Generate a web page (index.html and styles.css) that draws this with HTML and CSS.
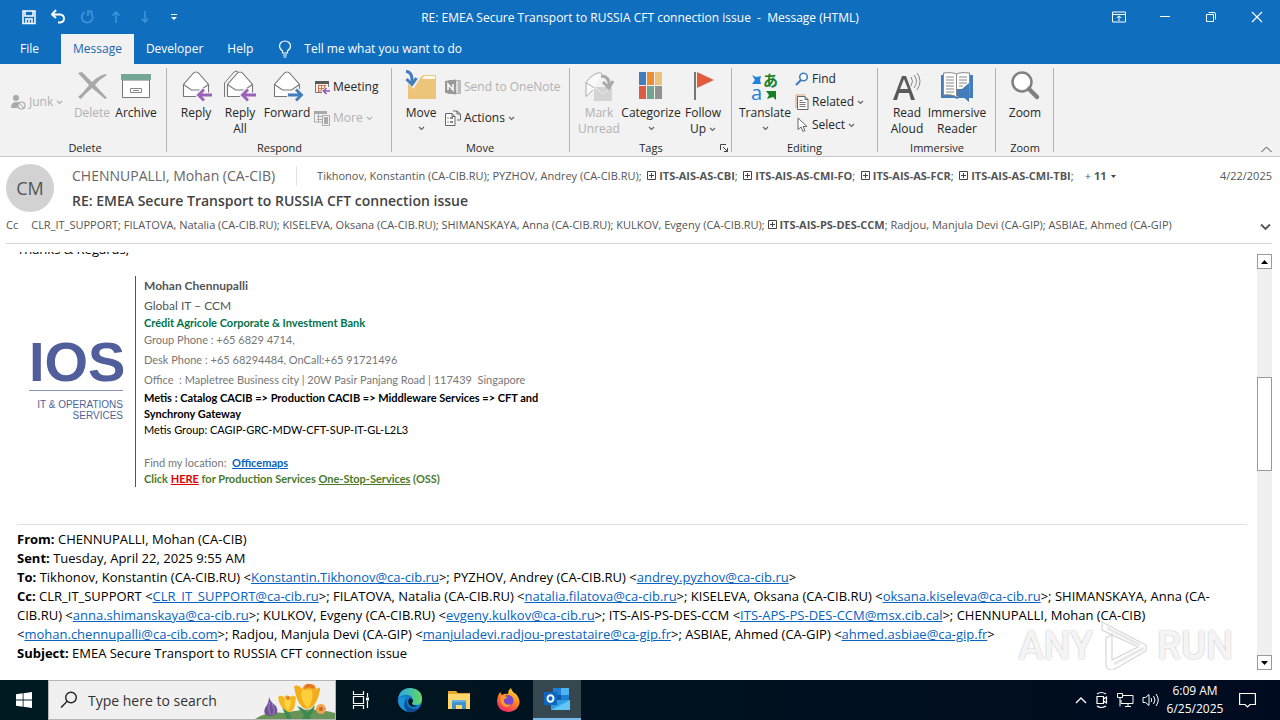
FILE: index.html
```html
<!DOCTYPE html>
<html lang="en">
<head>
<meta charset="utf-8">
<title>RE: EMEA Secure Transport to RUSSIA CFT connection issue - Message (HTML)</title>
<link rel="stylesheet" href="styles.css">
</head>
<body>
<svg class="defs" aria-hidden="true">
  <symbol id="chev" viewBox="0 0 7 5"><path d="M1 1l2.500 2.500L6 1" fill="none" stroke="currentColor" stroke-width="1.200"/></symbol>
  <symbol id="plus" viewBox="0 0 9 9"><path d="M.5.5h8v8h-8zM2 4.500h5M4.500 2v5" fill="none" stroke="#444"/></symbol>
  <symbol id="envelope" viewBox="0 0 32 32"><path d="M3.500 14.500v12h25v-12L19 3.500q-3-3-6 0zM3.500 14.500l8 5.500h9l8-5.500" fill="#fff" stroke="#777" stroke-width="1.100"/></symbol>
</svg>

<header class="titlebar">
  <div class="quick">
    <button aria-label="Save"><svg width="16" height="16" viewBox="0 0 16 16"><path d="M2 2h12v12.500H2zM4 2v5h8V2M5 14v-4h6v4M8 11v3" fill="none" stroke="#fff" stroke-width="1.500"/></svg></button>
    <button aria-label="Undo"><svg width="16" height="16" viewBox="0 0 16 16"><path d="M6 1L2 5.500l4 3.500M2.500 5.500H10q4 .5 4 4t-4 4H8" fill="none" stroke="#fff" stroke-width="1.900"/></svg></button>
    <button aria-label="Redo" class="dim"><svg width="16" height="16" viewBox="0 0 16 16"><path d="M6 3a5.500 5.500 0 1 0 6 1M9 7V2.500h4.500" fill="none" stroke="currentColor" stroke-width="1.800"/></svg></button>
    <button aria-label="Previous" class="dim"><svg width="16" height="16" viewBox="0 0 16 16"><path d="M8 14V3M4.500 6.500L8 3l3.500 3.500" fill="none" stroke="currentColor" stroke-width="1.700"/></svg></button>
    <button aria-label="Next" class="dim"><svg width="16" height="16" viewBox="0 0 16 16"><path d="M8 2v11M4.500 9.500L8 13l3.500-3.500" fill="none" stroke="currentColor" stroke-width="1.700"/></svg></button>
    <button aria-label="Customize"><svg width="16" height="16" viewBox="0 0 16 16"><path d="M5 5.500h6" stroke="#fff"/><path d="M5 8h6l-3 3z" fill="#fff"/></svg></button>
  </div>
  <h1 class="title">RE: EMEA Secure Transport to RUSSIA CFT connection issue&nbsp; -&nbsp; Message (HTML)</h1>
  <div class="window-buttons">
    <button aria-label="Ribbon display options"><svg width="14" height="12" viewBox="0 0 14 12"><path d="M.5 1h13v10H.5zM.5 3.500h13M7 10V5M4.800 7L7 4.800 9.200 7" fill="none" stroke="#fff"/></svg></button>
    <button aria-label="Minimize"><svg width="12" height="12" viewBox="0 0 12 12"><path d="M1 5.500h10" stroke="#fff"/></svg></button>
    <button aria-label="Restore"><svg width="12" height="12" viewBox="0 0 12 12"><path d="M1.500 3.500h7v7h-7zM3.500 1.500H9q1.500 0 1.500 1.500v5.500" fill="none" stroke="#fff"/></svg></button>
    <button aria-label="Close"><svg width="12" height="12" viewBox="0 0 12 12"><path d="M1 1l10 10M11 1L1 11" stroke="#fff" stroke-width="1.200"/></svg></button>
  </div>
</header>

<nav class="tabs">
  <button class="tab file">File</button>
  <button class="tab active">Message</button>
  <button class="tab">Developer</button>
  <button class="tab">Help</button>
  <button class="tell"><svg width="14" height="18" viewBox="0 0 14 18"><path d="M4.500 13v-2Q1.500 9 1.500 6a5.500 5 0 0 1 11 0q0 3-3 5v2zM5 15h4M5.500 17h3" fill="none" stroke="#fff" stroke-width="1.200"/></svg>Tell me what you want to do</button>
</nav>

<main class="window">
<section class="ribbon" aria-label="Message ribbon">
  <div class="group g-delete">
    <div class="tools">
      <div class="stack junk">
        <button class="small off"><svg width="16" height="16" viewBox="0 0 16 16"><circle cx="6" cy="4" r="3" fill="#aaa"/><path d="M1 14q0-6 5-6 3 0 4 1l-3 5z" fill="#aaa"/><circle cx="11.500" cy="11.500" r="3.500" fill="#eee" stroke="#aaa" stroke-width="1.200"/><path d="M9 9l5 5" stroke="#aaa"/></svg>Junk<svg class="chev"><use href="#chev"/></svg></button>
      </div>
      <button class="big off w44"><svg width="32" height="32" viewBox="0 0 32 32"><path d="M2 3l4-1 10 10Q22 6 29 4l2 1q-7 4-12 10l12 13-2 1-13-11Q9 24 5 29l-3-2Q8 22 13 15z" fill="#a9a9a9"/></svg><span>Delete</span></button>
      <button class="big w44"><svg width="32" height="32" viewBox="0 0 32 32"><path d="M2.500 10h27v17.500h-27z" fill="#fff" stroke="#777"/><path d="M1 4h30v6H1z" fill="#73a794"/><path d="M10.500 18.500h11v4h-11zM13 20.500h6" fill="none" stroke="#888"/></svg><span>Archive</span></button>
    </div>
    <h2>Delete</h2>
  </div>
  <div class="group g-respond">
    <div class="tools">
      <button class="big w44"><svg width="32" height="32" viewBox="0 0 32 32"><use href="#envelope"/><path d="M31 25H18M24 19l-6 6 6 6" fill="none" stroke="#f2f2f2" stroke-width="5"/><path d="M32 25H18.500M24 19.500L18.500 25l5.500 5.500" fill="none" stroke="#9a61b8" stroke-width="2.800"/></svg><span>Reply</span></button>
      <button class="big w44"><svg width="32" height="32" viewBox="0 0 32 32"><path d="M.5 27V13L10 2q2-2 4 0" fill="none" stroke="#777"/><use href="#envelope"/><path d="M31 25H18M24 19l-6 6 6 6" fill="none" stroke="#f2f2f2" stroke-width="5"/><path d="M32 25H18.500M24 19.500L18.500 25l5.500 5.500" fill="none" stroke="#9a61b8" stroke-width="2.800"/></svg><span>Reply<br>All</span></button>
      <button class="big w50"><svg width="32" height="32" viewBox="0 0 32 32"><use href="#envelope"/><path d="M16 25h14M25 19l6 6-6 6" fill="none" stroke="#f2f2f2" stroke-width="5"/><path d="M17 25h13.500M25 19.500l5.500 5.500-5.500 5.500" fill="none" stroke="#437dbb" stroke-width="2.800"/></svg><span>Forward</span></button>
      <div class="stack two">
        <button class="small"><svg width="16" height="16" viewBox="0 0 16 16"><path d="M1 2h14v3H1z" fill="#5a5a5a"/><path d="M1.500 5v8.500H8M14.500 5v3" fill="none" stroke="#777"/><path d="M4 6.500h8M4 9.500h6M4 12h3M4.500 6v7M7.500 6v6M10.500 6v3" fill="none" stroke="#d17640"/><path d="M16 12h-6M12.500 9L9.500 12l3 3" fill="none" stroke="#9254b6" stroke-width="1.600"/></svg>Meeting</button>
        <button class="small off"><svg width="16" height="16" viewBox="0 0 16 16"><path d="M0 1h13v3H0z" fill="#aaa"/><path d="M.5 4v8H8M3 6.500h5M3 9.500h5M4.500 4v8" fill="none" stroke="#aaa"/><path d="M8.500 5.500h7v10h-7z" fill="#f2f2f2" stroke="#aaa"/><path d="M10 7h4v7h-4z" fill="#aaa"/></svg>More<svg class="chev"><use href="#chev"/></svg></button>
      </div>
    </div>
    <h2>Respond</h2>
  </div>
  <div class="group g-move">
    <div class="tools">
      <button class="big w48"><svg width="32" height="32" viewBox="0 0 32 32"><path d="M3 29V9h11l4-4h13v24z" fill="#ecc57b"/><path d="M19 6h11v3H17z" fill="#fff8ea"/><path d="M1 2q7-2 7 12M1.500 9L8 15l4.500-7" fill="none" stroke="#f2f2f2" stroke-width="5"/><path d="M1 1.500q7 0 6 13M1.500 9l5.500 5.500L11.500 8" fill="none" stroke="#437dbb" stroke-width="3"/></svg><span>Move</span><svg class="chev"><use href="#chev"/></svg></button>
      <div class="stack two">
        <button class="small off"><svg width="16" height="16" viewBox="0 0 16 16"><path d="M3.500 1.500h12v13h-12z" fill="#ddd" stroke="#aaa"/><path d="M13 1h3v14h-3z" fill="#bbb"/><path d="M0 2l11-1.500v15L0 14z" fill="#999"/><path d="M3 11V5l5 6V5" fill="none" stroke="#fff" stroke-width="1.500"/></svg>Send to OneNote</button>
        <button class="small"><svg width="16" height="16" viewBox="0 0 16 16"><path d="M.5 3.500H7l3 3v9H.500zM7 3.500v3h3" fill="#fff" stroke="#666"/><path d="M2.500 8h1M5 8h3M2.500 12h1M5 12h3" stroke="#666" stroke-width="1.500"/><path d="M8 1h4l3.500 3v6H12M12 1v3h3" fill="none" stroke="#666"/></svg>Actions<svg class="chev"><use href="#chev"/></svg></button>
      </div>
    </div>
    <h2>Move</h2>
  </div>
  <div class="group g-tags">
    <div class="tools">
      <button class="big off w44"><svg width="32" height="32" viewBox="0 0 32 32"><path d="M10 20l-7 6.500v-14Q6 7 13 3.500q3-1.500 6 0M3 12.500l10 6.500" fill="#fafafa" stroke="#aaa"/><path d="M11 17h18v14H11z" fill="#d3d3d3"/><path d="M11 17l9 7 9-7" fill="none" stroke="#eee"/><path d="M18 6q9 0 8 11M20 12l6 6 4-7" fill="none" stroke="#aaa" stroke-width="3"/></svg><span>Mark<br>Unread</span></button>
      <button class="big w60"><svg width="32" height="32" viewBox="0 0 32 32"><path d="M4 2h7v13H4z" fill="#437dbb"/><path d="M12 2h7v13h-7z" fill="#ea8f36"/><path d="M20 2h7v13h-7z" fill="#eac27c"/><path d="M4 16h7v13H4z" fill="#dc5b42"/><path d="M12 16h7v13h-7z" fill="#72a48f"/><path d="M20 16h7v13h-7z" fill="#929292"/></svg><span>Categorize</span><svg class="chev"><use href="#chev"/></svg></button>
      <button class="big w44"><svg width="32" height="32" viewBox="0 0 32 32"><path d="M8 2v28" stroke="#777" stroke-width="2"/><path d="M10 2l17 8-17 8z" fill="#e25b3d"/></svg><span>Follow<br>Up <svg class="chev"><use href="#chev"/></svg></span></button>
    </div>
    <h2>Tags</h2>
    <button class="launcher" aria-label="Tags options"><svg width="8" height="8" viewBox="0 0 8 8"><path d="M.5 6V.5H6M3 3l4.500 4.500M7.500 4v3.500H4" fill="none" stroke="#444"/></svg></button>
  </div>
  <div class="group g-editing">
    <div class="tools">
      <button class="big w54"><svg width="32" height="32" viewBox="0 0 32 32"><path d="M3 5l4 2 5-1-1 4 1 4H3l3-4z" fill="#2383dc"/><path d="M17 21h10v9l-3-3-6 2 2-4z" fill="#168025"/><text x="2" y="30" class="ico-a">a</text><text x="14" y="16" class="ico-ja">あ</text></svg><span>Translate</span><svg class="chev"><use href="#chev"/></svg></button>
      <div class="stack three">
        <button class="small"><svg width="14" height="14" viewBox="0 0 14 14"><circle cx="8.500" cy="5" r="3.800" fill="#fff" stroke="#437dbb" stroke-width="1.600"/><path d="M6 8l-5 5" stroke="#437dbb" stroke-width="2.200"/></svg>Find</button>
        <button class="small"><svg width="14" height="16" viewBox="0 0 14 16"><path d="M1 14V1h9" fill="none" stroke="#e0a070"/><path d="M2.500 2.500H10l3 3v10H2.500zM10 2.500v3h3" fill="#fff" stroke="#666"/><path d="M4.500 8.500h6M4.500 10.500h6M4.500 12.500h6M4.500 6.500h3" stroke="#777"/></svg>Related<svg class="chev"><use href="#chev"/></svg></button>
        <button class="small"><svg width="14" height="16" viewBox="0 0 14 16"><path d="M3 1v11.500l3-2.500 2 4.500 2-1-2-4h4z" fill="#fff" stroke="#666"/></svg>Select<svg class="chev"><use href="#chev"/></svg></button>
      </div>
    </div>
    <h2>Editing</h2>
  </div>
  <div class="group g-immersive">
    <div class="tools">
      <button class="big w44"><svg width="32" height="32" viewBox="0 0 32 32"><path d="M2 30L11 6h4l9 24h-4l-2-7H8l-2 7zM9 19h8l-4-10z" fill="#5a5a5a" fill-rule="evenodd"/><path d="M20 7q3 4 0 9M23 5q5 6 0 13M26 3q6 8 0 17" fill="none" stroke="#888"/></svg><span>Read<br>Aloud</span></button>
      <button class="big w56"><svg width="32" height="32" viewBox="0 0 32 32"><path d="M0 5h32v23H18l-2 1-2-1H0z" fill="#437dbb"/><path d="M2.500 3q9-1 13 1 4-2 13-1v22q-9-1-13 2-4-3-13-2z" fill="#fff" stroke="#888"/><path d="M15.500 4v22M5 7h8M5 10h8M5 13h8M5 16h8M5 19h8M5 22h8M18 7h8M18 10h8M18 13h8M18 16h4" stroke="#888"/><path d="M16 19h5l7-6v19l-7-6h-5z" fill="#437dbb"/><path d="M29 18q3 4 0 9" fill="none" stroke="#437dbb"/></svg><span>Immersive<br>Reader</span></button>
    </div>
    <h2>Immersive</h2>
  </div>
  <div class="group g-zoom">
    <div class="tools">
      <button class="big w44"><svg width="32" height="32" viewBox="0 0 32 32"><circle cx="13" cy="12" r="9.500" fill="#fff" stroke="#808080" stroke-width="2.500"/><path d="M20 19l8 8" stroke="#808080" stroke-width="4.500" stroke-linecap="round"/></svg><span>Zoom</span></button>
    </div>
    <h2>Zoom</h2>
  </div>
  <button class="collapse" aria-label="Collapse ribbon"><svg width="11" height="7" viewBox="0 0 11 7"><path d="M.5 6l5-5 5 5" fill="none" stroke="#444"/></svg></button>
</section>

<section class="heading">
  <div class="who">
    <div class="avatar">CM</div>
    <div class="who-text">
      <div class="line">
        <span class="sender">CHENNUPALLI, Mohan (CA-CIB)</span>
        <span class="to">Tikhonov, Konstantin (CA-CIB.RU); PYZHOV, Andrey (CA-CIB.RU); &nbsp;<svg class="plus"><use href="#plus"/></svg> <b>ITS-AIS-AS-CBI</b>; &nbsp;<svg class="plus"><use href="#plus"/></svg> <b>ITS-AIS-AS-CMI-FO</b>; &nbsp;<svg class="plus"><use href="#plus"/></svg> <b>ITS-AIS-AS-FCR</b>; &nbsp;<svg class="plus"><use href="#plus"/></svg> <b>ITS-AIS-AS-CMI-TBI</b>;</span>
        <button class="more">+ <b>11</b><svg width="7" height="5" viewBox="0 0 7 5"><path d="M1 1h5L3.500 4z" fill="#444"/></svg></button>
        <time class="date">4/22/2025</time>
      </div>
      <h2 class="subject">RE: EMEA Secure Transport to RUSSIA CFT connection issue</h2>
    </div>
  </div>
  <div class="cc">
    <span class="cc-label">Cc</span>
    <span class="cc-list">CLR_IT_SUPPORT; FILATOVA, Natalia (CA-CIB.RU); KISELEVA, Oksana (CA-CIB.RU); SHIMANSKAYA, Anna (CA-CIB.RU); KULKOV, Evgeny (CA-CIB.RU); <svg class="plus"><use href="#plus"/></svg> <b>ITS-AIS-PS-DES-CCM</b>; Radjou, Manjula Devi (CA-GIP); ASBIAE, Ahmed (CA-GIP)</span>
    <button class="expand" aria-label="Expand header"><svg width="11" height="8" viewBox="0 0 11 8"><path d="M1 1.500l4.500 4.500L10 1.500" fill="none" stroke="#555" stroke-width="1.900"/></svg></button>
  </div>
</section>

<section class="reader">
  <article class="mail">
    <p class="cut">Thanks &amp; Regards,</p>
    <div class="signature">
      <div class="logo"><strong>IOS</strong><span>IT &amp; OPERATIONS<br>SERVICES</span></div>
      <div class="card">
        <p class="l20 s12"><b>Mohan Chennupalli</b></p>
        <p class="l20 s12">Global IT – CCM</p>
        <p class="l14 green"><b>Crédit Agricole Corporate &amp; Investment Bank</b></p>
        <p class="l20 gray">Group Phone : +65 6829 4714,</p>
        <p class="l20 gray">Desk Phone : +65 68294484, OnCall:+65 91721496</p>
        <p class="l20 gray">Office&nbsp; : Mapletree Business city | 20W Pasir Panjang Road | 117439&nbsp; Singapore</p>
        <p class="l16 black"><b>Metis : Catalog CACIB =&gt; Production CACIB =&gt; Middleware Services =&gt; CFT and<br>Synchrony Gateway</b></p>
        <p class="l16 black">Metis Group: CAGIP-GRC-MDW-CFT-SUP-IT-GL-L2L3</p>
        <p class="l16 find gray">Find my location:&nbsp; <a href="#"><b>Officemaps</b></a></p>
        <p class="l16 olive"><b>Click <a class="here" href="#">HERE</a> for Production Services <a class="oss" href="#">One-Stop-Services</a> (OSS)</b></p>
      </div>
    </div>
    <div class="quoted">
      <b>From:</b> CHENNUPALLI, Mohan (CA-CIB)<br>
      <b>Sent:</b> Tuesday, April 22, 2025 9:55 AM<br>
      <b>To:</b> Tikhonov, Konstantin (CA-CIB.RU) &lt;<a href="#">Konstantin.Tikhonov@ca-cib.ru</a>&gt;; PYZHOV, Andrey (CA-CIB.RU) &lt;<a href="#">andrey.pyzhov@ca-cib.ru</a>&gt;<br>
      <b>Cc:</b> CLR_IT_SUPPORT &lt;<a href="#">CLR_IT_SUPPORT@ca-cib.ru</a>&gt;; FILATOVA, Natalia (CA-CIB.RU) &lt;<a href="#">natalia.filatova@ca-cib.ru</a>&gt;; KISELEVA, Oksana (CA-CIB.RU) &lt;<a href="#">oksana.kiseleva@ca-cib.ru</a>&gt;; SHIMANSKAYA, Anna (CA-<br>CIB.RU) &lt;<a href="#">anna.shimanskaya@ca-cib.ru</a>&gt;; KULKOV, Evgeny (CA-CIB.RU) &lt;<a href="#">evgeny.kulkov@ca-cib.ru</a>&gt;; ITS-AIS-PS-DES-CCM &lt;<a href="#">ITS-APS-PS-DES-CCM@msx.cib.cal</a>&gt;; CHENNUPALLI, Mohan (CA-CIB)<br>
      &lt;<a href="#">mohan.chennupalli@ca-cib.com</a>&gt;; Radjou, Manjula Devi (CA-GIP) &lt;<a href="#">manjuladevi.radjou-prestataire@ca-gip.fr</a>&gt;; ASBIAE, Ahmed (CA-GIP) &lt;<a href="#">ahmed.asbiae@ca-gip.fr</a>&gt;<br>
      <b>Subject:</b> EMEA Secure Transport to RUSSIA CFT connection issue
    </div>
  </article>
  <div class="scrollbar">
    <button aria-label="Scroll up"><svg width="7" height="4" viewBox="0 0 7 4"><path d="M0 4l3.500-4L7 4z"/></svg></button>
    <div class="track"><div class="thumb"></div></div>
    <button aria-label="Scroll down"><svg width="7" height="4" viewBox="0 0 7 4"><path d="M0 0l3.500 4L7 0z"/></svg></button>
  </div>
  <div class="watermark"><span>ANY</span><svg width="56" height="52" viewBox="0 0 56 52"><path d="M5 10V2l44 23v6L16 50q-6 1-7-5V18l6-4v26l26-13z" fill="#fff" fill-opacity=".85" stroke="#d6d6d6" stroke-width="1.200"/><path d="M17 44L47 28M10 8l33 17" stroke="#e8e8e8" stroke-width="3"/></svg><span>RUN</span></div>
</section>
</main>

<footer class="taskbar">
  <button class="start" aria-label="Start"><svg width="16" height="16" viewBox="0 0 16 16"><path d="M0 2.300L6.700 1.300v6.200H0zM7.500 1.200L16 0v7.500H7.500zM0 8.400h6.700v6.300L0 13.700zM7.500 8.400H16V16l-8.500-1.200z" fill="#fff"/></svg></button>
  <label class="search">
    <svg width="18" height="18" viewBox="0 0 18 18"><circle cx="11" cy="6.500" r="5.300" fill="none" stroke="#222" stroke-width="1.400"/><path d="M7.200 10.300L1 16.500" stroke="#222" stroke-width="1.400"/></svg>
    <input type="text" placeholder="Type here to search" aria-label="Type here to search">
    <svg class="flowers" width="80" height="38" viewBox="0 0 80 38"><path d="M0 38q12-8 30-6 26-7 50 0v6z" fill="#689458"/><path d="M32 38l-5-12q8 2 9 12zM52 38l-10-13q12 4 14 13M46 38l14-14q-2 10-8 14" fill="#3f8a50"/><path d="M14 16q2 6 7 9 4 8-4 10-10 0-7-8 4-5 4-11z" fill="#6f5199"/><path d="M15 21q-3 8 1 13M17 23q4 6 1 11" fill="none" stroke="#a486c0"/><path d="M23 16q4-3 6 1 2-5 6-1 3-3 6 0-1 11-3 13-3 4-8 0-6-4-7-13z" fill="#f5b91f"/><path d="M30 17q-2 6 3 13 4-7 2-13" fill="#ffd447"/><circle cx="33" cy="17" r="2" fill="#e8812d"/><path d="M39 5q5-2 8 3 3-7 8-3 5-4 6 3 5-3 4 1-2 12-8 17-5 4-10 0-6-6-8-21z" fill="#f2ad1d"/><path d="M47 9q-3 9 6 19 6-10 4-19-5-1-10 0z" fill="#ffce3d"/><path d="M49 8q1-6 6-5 4 0 5 5-6-3-11 0z" fill="#e47629"/><circle cx="66" cy="28" r="5" fill="#f2ae51"/><path d="M61 28h10M66 23v10M63 25l6 6M69 25l-6 6" stroke="#e99242"/><circle cx="66" cy="28" r="2" fill="#c86231"/></svg>
  </label>
  <div class="apps">
    <button aria-label="Task View"><svg width="18" height="18" viewBox="0 0 18 18"><path d="M1.500 0v3.500h10V0M1.500 18v-3.500h10V18M1.500 5.500h10v7h-10zM15.500 2v4M15.500 10v7" fill="none" stroke="#fff" stroke-width="1.200"/><path d="M14 6.500h3v3h-3z" fill="#fff"/></svg></button>
    <button aria-label="Edge"><svg width="24" height="24" viewBox="0 0 24 24"><defs><linearGradient id="eg" x2="1"><stop stop-color="#24a7e4"/><stop offset="1" stop-color="#66d864"/></linearGradient></defs><circle cx="12" cy="12" r="12" fill="#1479cb"/><path d="M0 11Q2 0 12 0q12 1 12 11 0 6-6 6-6 0-4-3 2-6-4-7Q4 6 0 11z" fill="url(#eg)"/><path d="M8 9q-5 7 1 14-8-2-9-10 2-5 8-4z" fill="#1795d4"/><path d="M9 11q-2 9 7 10 4 0 6-2-4 6-12 5-7-6-1-13z" fill="#114b93"/><path d="M12 10q5 2 2 5 0 3 5 2.500-4 3-8-1-2-4 1-6.500z" fill="#061722"/></svg></button>
    <button aria-label="File Explorer"><svg width="22" height="20" viewBox="0 0 22 20"><path d="M0 1h8l2 2h12v16H0z" fill="#e6a52c"/><path d="M0 4h22v15H0z" fill="#ffd66c"/><path d="M4 19v-9h14v9h-4v-4H8v4z" fill="#3d93cf"/><path d="M4 10h14v2H4z" fill="#67b1df"/></svg></button>
    <button aria-label="Firefox"><svg width="24" height="24" viewBox="0 0 24 24"><defs><linearGradient id="fx" x1=".8" y1="0" x2=".3" y2="1"><stop stop-color="#ffe13a"/><stop offset=".45" stop-color="#ff8a22"/><stop offset="1" stop-color="#f12568"/></linearGradient></defs><path d="M4 4l2 3q3-2 6-1 0-4 3-6 1 4 5 6 5 6 3 11-3 7-11 7Q1 23 1 13q0-5 3-9z" fill="url(#fx)"/><circle cx="12" cy="12.500" r="5.500" fill="#7447ce"/><path d="M5 8q4-1 7 2-5 0-4 4 2 4 7 2-3 5-8 2-4-4-2-10z" fill="#ff9b27"/></svg></button>
    <button class="running" aria-label="Outlook"><svg width="26" height="24" viewBox="0 0 26 24"><path d="M9 1h16v14H9z" fill="#1b80d4"/><path d="M17 1h8v7h-8z" fill="#50b4f3"/><path d="M9 8h8v7H9z" fill="#0a5aa5"/><path d="M7 13h19v10H7z" fill="#2d9de5"/><path d="M7 23l19-10v10z" fill="#62c5f5"/><path d="M0 5h13v13H0z" fill="#0b67c2"/><ellipse cx="6.500" cy="11.500" rx="3" ry="3.300" fill="none" stroke="#fff" stroke-width="1.900"/></svg></button>
  </div>
  <div class="tray">
    <button aria-label="Show hidden icons"><svg width="12" height="8" viewBox="0 0 12 8"><path d="M1 7l5-5 5 5" fill="none" stroke="#fff" stroke-width="1.300"/></svg></button>
    <button aria-label="Meet now"><svg width="14" height="18" viewBox="0 0 14 18"><path d="M2 5.500h6.500v7H2zM8.500 8l3-2v6l-3-2M2 3q4-3 9 0M2 15q4 3 9 0" fill="none" stroke="#fff" stroke-width="1.200"/></svg></button>
    <button aria-label="Network"><svg width="17" height="15" viewBox="0 0 17 15"><path d="M5 2.500h11v8H4V7M8 13.500h6M11 10.500v3M.500.500h5v4h-5zM3 4.500v9" fill="none" stroke="#fff"/></svg></button>
    <button aria-label="Volume"><svg width="18" height="14" viewBox="0 0 18 14"><path d="M1 4.500h2.500L7 1.500v11l-3.500-3H1zM9 5q1.500 2 0 4M11.500 3q3 4 0 8M14 1q4.500 6 0 12" fill="none" stroke="#fff"/></svg></button>
  </div>
  <div class="clock"><time>6:09 AM</time><time>6/25/2025</time></div>
  <button class="notify" aria-label="Notifications"><svg width="17" height="16" viewBox="0 0 17 16"><path d="M.6 1.500h15.800v11H11l-2.500 2.500L6 12.500H.600z" fill="none" stroke="#fff" stroke-width="1.200"/></svg></button>
</footer>
</body>
</html>
```
FILE: styles.css
```css
* { box-sizing: border-box; }
body {
  margin: 0;
  min-height: 100vh;
  display: flex;
  flex-direction: column;
  overflow: hidden;
  background: #fff;
  color: #262626;
  font: 12px/16px "Open Sans", "Noto Sans", sans-serif;
}
button {
  border: 0;
  margin: 0;
  padding: 0;
  background: none;
  color: inherit;
  font: inherit;
  white-space: nowrap;
}
h1, h2, p { margin: 0; font: inherit; }
svg { display: block; flex: none; overflow: visible; }
.defs { position: absolute; width: 0; height: 0; }

/* title bar and tabs */
.titlebar {
  height: 34px;
  display: grid;
  grid-template-columns: 1fr auto 1fr;
  align-items: center;
  background: #106ebe;
  color: #fff;
}
.quick { display: flex; gap: 13px; padding-left: 21px; }
.dim { color: #3e92d8; }
.title { white-space: nowrap; padding-top: 2px; }
.window-buttons { display: flex; justify-content: flex-end; height: 30px; }
.window-buttons button { width: 46px; display: grid; place-items: center; }
.tabs { height: 30px; display: flex; background: #106ebe; color: #fff; padding-left: 8px; }
.tab { padding: 0 12px; }
.tab.file { margin-right: 10px; }
.tab.active { background: #f2f2f2; color: #1467b3; }
.tell { display: flex; align-items: center; gap: 12px; padding-left: 13px; }

/* ribbon */
.window { flex: 1; display: flex; flex-direction: column; }
.ribbon {
  display: flex;
  position: relative;
  height: 93px;
  background: #f2f2f2;
  border-bottom: 1px solid #c8c8c8;
}
.group { position: relative; display: flex; flex-direction: column; margin: 4px 0; padding: 0 6px 0 7px; border-right: 1px solid #b4b4b4; }
.group h2 { text-align: center; margin-top: auto; font-size: 11px; line-height: 16px; margin-bottom: -4px; }
.tools { display: flex; height: 70px; }
.g-delete { width: 167px; padding-left: 10px; }
.g-respond { width: 225px; }
.g-move { width: 178px; padding-left: 5px; }
.g-tags { width: 162px; }
.g-editing { width: 146px; padding-left: 6px; }
.g-immersive { width: 118px; }
.g-zoom { width: 58px; }
.big { display: flex; flex-direction: column; align-items: center; padding-top: 2px; line-height: 16px; }
.big > svg:first-child { margin-bottom: 3px; }
.big > .chev { margin-top: 5px; }
.w44 { width: 44px; }
.w48 { width: 48px; }
.w50 { width: 50px; }
.w54 { width: 54px; }
.w56 { width: 56px; }
.w60 { width: 60px; }
.off { color: #b1b1b1; }
.chev { width: 7px; height: 5px; color: #666; }
.off .chev { color: #b1b1b1; }
span .chev { display: inline-block; vertical-align: middle; }
.stack { display: flex; flex-direction: column; }
.stack.junk { width: 60px; padding-top: 26px; }
.stack.two { padding: 11px 0 0 2px; gap: 15px; }
.g-move .stack.two { padding-left: 0; }
.stack.three { padding: 3px 0 0 3px; gap: 7px; }
.small { display: flex; align-items: center; gap: 3px; height: 16px; }
.ico-a { font: 20px "Open Sans", sans-serif; fill: #2383dc; }
.ico-ja { font: bold 15px "Noto Sans CJK JP", sans-serif; fill: #168025; }
.launcher { position: absolute; right: 3px; bottom: 0; }
.collapse { margin: auto 8px 3px auto; }

/* message heading */
.heading { margin: 0 8px 0 6px; border-bottom: 1px solid #d8d8d8; color: #555; font-size: 11px; }
.who { display: flex; align-items: center; gap: 18px; padding-top: 7px; }
.avatar {
  width: 48px;
  height: 48px;
  border-radius: 50%;
  display: grid;
  place-items: center;
  flex: none;
  background: #d2d2d2;
  font-size: 18px;
}
.who-text { flex: 1; }
.line { display: flex; align-items: center; height: 22px; white-space: nowrap; }
.sender { font-size: 14px; line-height: 20px; padding-right: 21px; border-right: 1px solid #e2e2e2; color: #666; }
.to { padding-left: 20px; }
.plus { display: inline-block; width: 9px; height: 9px; }
.more { display: flex; align-items: center; gap: 3px; margin-left: 11px; }
.date { margin-left: auto; }
.subject { font-size: 14px; line-height: 20px; font-weight: 600; color: #444; margin-top: 4px; }
.cc { display: flex; align-items: center; gap: 13px; height: 31px; white-space: nowrap; padding-bottom: 5px; }
.expand { margin: 4px 1px 0 auto; }

/* message body */
.reader { flex: 1; display: flex; position: relative; margin: 8px 8px 10px 17px; overflow: hidden; }
.mail { flex: 1; padding-right: 10px; color: #000; overflow: hidden; }
.cut { font-size: 13px; line-height: 19px; margin-top: -12px; }
.signature { display: flex; margin-top: 17px; font-family: Lato, "Open Sans", sans-serif; }
.logo { width: 118px; padding: 58px 12px 0 12px; text-align: right; color: #505f9b; font-family: "Liberation Sans", Arial, sans-serif; }
.logo strong { display: block; font-size: 56px; line-height: 56px; border-bottom: 1px solid #8b94bd; }
.logo span { display: block; font-size: 10px; line-height: 11px; margin-top: 8px; white-space: nowrap; }
.card { border-left: 1px solid #555; padding-left: 8px; color: #555; font-size: 11px; }
.s12 { font-size: 12px; }
.l14 { line-height: 14px; }
.l16 { line-height: 16px; }
.l20 { line-height: 20px; }
.green { color: #00734b; }
.gray { color: #777; }
.black { color: #000; }
.olive { color: #4b7a2b; }
.find { margin-top: 17px; }
a { color: #0563c1; }
.here { color: #e00000; }
.oss { color: inherit; }
.quoted { margin-top: 37px; padding-top: 5px; border-top: 1px solid #e1e1e1; font-size: 13px; line-height: 19px; white-space: nowrap; }
.scrollbar { width: 15px; display: flex; flex-direction: column; padding-top: 2px; }
.scrollbar button { height: 15px; border: 1px solid #999; background: #fff; display: grid; place-items: center; }
.track { flex: 1; background: #f0f0f0; padding-top: 108px; }
.thumb { height: 94px; border: 1px solid #999; background: #fff; }
.watermark {
  position: absolute;
  right: 39px;
  bottom: -2px;
  display: flex;
  align-items: center;
  gap: 4px;
  font: 500 38px Roboto, "Liberation Sans", sans-serif;
  color: rgba(255, 255, 255, .9);
  text-shadow: 0 0 2px #aaa;
  pointer-events: none;
}

/* taskbar */
.taskbar { height: 40px; display: flex; align-items: stretch; background: linear-gradient(90deg, #001a22, #00101f 60%, #000b20); color: #fff; }
.start { width: 48px; display: grid; place-items: center; }
.search { width: 288px; display: flex; align-items: center; background: #f0f0f0; border: 1px solid #b5b5b5; padding-left: 11px; gap: 10px; color: #333; }
.search input { flex: 1; min-width: 0; border: 0; padding: 0; background: none; outline: 0; font: 14px "Open Sans", sans-serif; }
.search input::placeholder { color: #333; opacity: 1; }
.apps { display: flex; gap: 1px; padding-left: 1px; }
.apps button { width: 48px; height: 40px; display: grid; place-items: center; }
.apps .running { background: #37474f; border-bottom: 2px solid #76b9ed; }
.tray { display: flex; align-items: center; margin-left: auto; gap: 8px; }
.clock { width: 70px; display: flex; flex-direction: column; justify-content: center; text-align: center; line-height: 18px; font-size: 12px; }
.notify { width: 34px; display: grid; place-items: center; margin-right: 16px; }
```
